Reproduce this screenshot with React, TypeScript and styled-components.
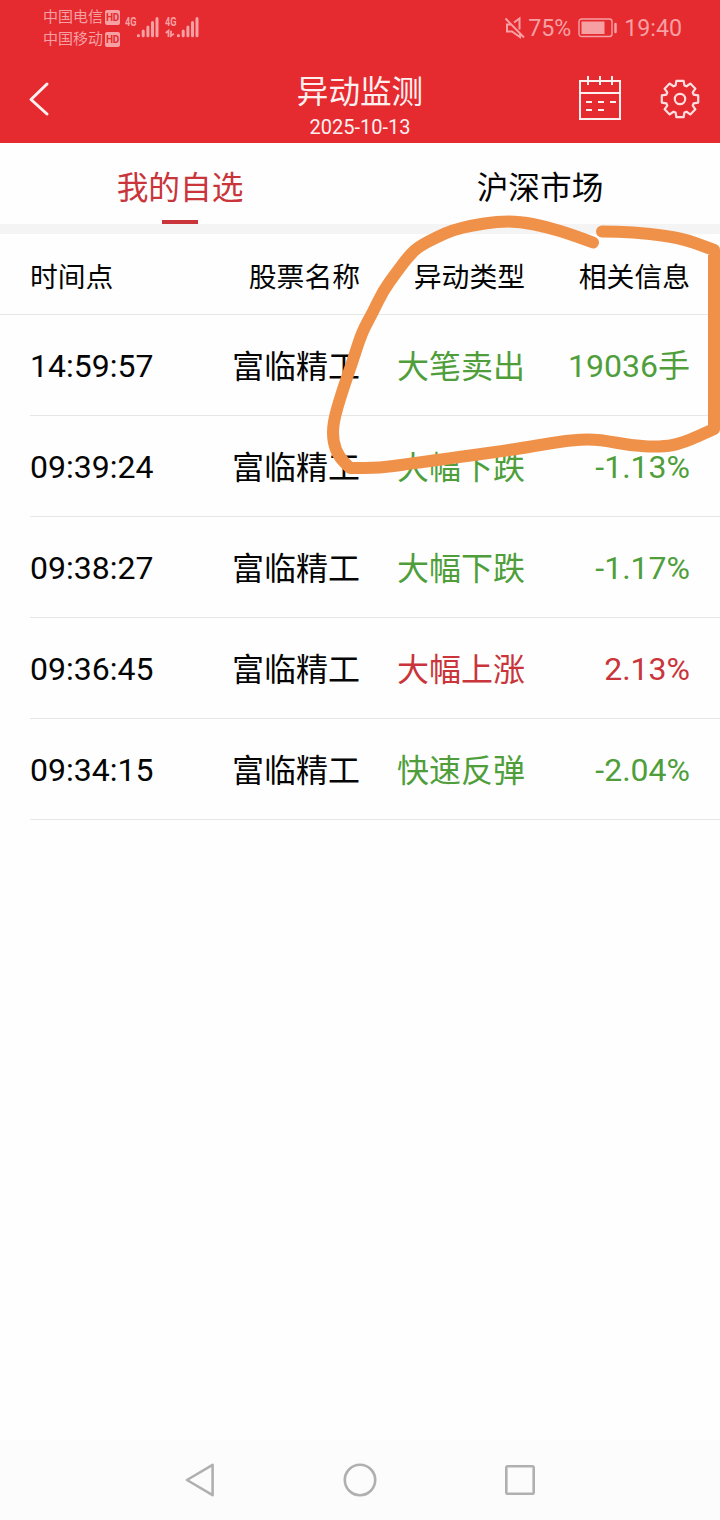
import React from "react";
import styled, { createGlobalStyle } from "styled-components";

const GlobalStyle = createGlobalStyle`
  * { box-sizing: border-box; }
  body { margin: 0; background: #fdfdfd; }
`;

const RED = "#e52a30";
const TINT = "#f6a0a3";
const UP = "#c9353a";
const DOWN = "#4f9e3b";

const Screen = styled.div`
  position: relative;
  display: flex;
  flex-direction: column;
  width: 720px;
  height: 1520px;
  overflow: hidden;
  background: #fdfefd;
  color: #050505;
  font-family: Roboto, "Noto Sans CJK SC", sans-serif;
`;

const StatusBar = styled.div`
  display: flex;
  justify-content: space-between;
  align-items: center;
  height: 56px;
  padding: 0 38px 0 43px;
  background: ${RED};
  color: ${TINT};
`;

const StatusGroup = styled.div`
  display: flex;
  align-items: center;
`;

const Carriers = styled.div`
  display: flex;
  flex-direction: column;
  margin-right: 5px;
`;

const Carrier = styled.div`
  display: flex;
  align-items: center;
  gap: 2px;
  height: 22px;
  font-size: 15px;
  line-height: 22px;
`;

const HdBadge = styled.span`
  width: 15px;
  height: 15px;
  border-radius: 2px;
  background: ${TINT};
  color: ${RED};
  font-size: 10px;
  font-weight: 700;
  line-height: 15.5px;
  text-align: center;
  letter-spacing: -0.3px;
`;

const StatusText = styled.span<{ $gap: number }>`
  margin-left: ${(p) => p.$gap}px;
  font-size: 23.2px;
  line-height: 56px;
`;

const BatteryIcon = styled.svg`
  margin-left: 7px;
`;

const NavBar = styled.header`
  display: grid;
  grid-template-columns: 160px 1fr 160px;
  height: 87px;
  background: ${RED};
  color: #fff0f0;
`;

const BackButton = styled.div`
  padding: 25px 0 0 26px;
`;

const Heading = styled.div`
  display: flex;
  flex-direction: column;
  align-items: center;
  padding-top: 17px;
`;

const Title = styled.h1`
  margin: 0;
  font-size: 31.6px;
  font-weight: 400;
  line-height: 40px;
`;

const DateText = styled.div`
  font-size: 20px;
  line-height: 28px;
`;

const Actions = styled.div`
  display: flex;
  gap: 34px;
  padding: 19px 0 0 17px;
`;

const Tabs = styled.nav`
  display: grid;
  grid-template-columns: 1fr 1fr;
  height: 91px;
  border-bottom: 10px solid #f4f4f4;
`;

const Tab = styled.div<{ $active?: boolean }>`
  display: flex;
  flex-direction: column;
  align-items: center;
  justify-content: space-between;
  padding-top: 22px;
  font-size: 31.7px;
  line-height: 48px;
  color: ${(p) => (p.$active ? UP : "#050505")};
`;

const TabLine = styled.span`
  width: 36px;
  height: 4px;
  background: ${UP};
`;

const Row = styled.div<{ $head?: boolean }>`
  display: grid;
  grid-template-columns: 150px 180px 165px 165px;
  align-items: center;
  height: ${(p) => (p.$head ? 81 : 101)}px;
  margin-left: ${(p) => (p.$head ? 0 : 30)}px;
  padding-top: ${(p) => (p.$head ? 7 : 2)}px;
  padding-left: ${(p) => (p.$head ? 30 : 0)}px;
  border-bottom: 1px solid #e6e8e8;
  font-size: ${(p) => (p.$head ? 27.8 : 32)}px;
  line-height: 48px;
`;

const Cell = styled.span<{ $color?: string; $left?: boolean; $lower?: boolean }>`
  padding-top: ${(p) => (p.$lower ? 2 : 0)}px;
  text-align: ${(p) => (p.$left ? "left" : "right")};
  color: ${(p) => p.$color ?? "inherit"};
  white-space: nowrap;
`;

const SystemNav = styled.footer`
  display: flex;
  justify-content: center;
  align-items: center;
  gap: 120px;
  height: 80px;
  margin-top: auto;
  background: #fcfcfc;
`;

const Annotation = styled.svg`
  position: absolute;
  top: 0;
  left: 0;
  pointer-events: none;
`;

const rows = [
  { time: "14:59:57", name: "富临精工", type: "大笔卖出", info: "19036手", color: DOWN },
  { time: "09:39:24", name: "富临精工", type: "大幅下跌", info: "-1.13%", color: DOWN },
  { time: "09:38:27", name: "富临精工", type: "大幅下跌", info: "-1.17%", color: DOWN },
  { time: "09:36:45", name: "富临精工", type: "大幅上涨", info: "2.13%", color: UP },
  { time: "09:34:15", name: "富临精工", type: "快速反弹", info: "-2.04%", color: DOWN },
];

// Outline of an eight-toothed gear centred on the origin.
const gearPoints = Array.from({ length: 8 }, (_, i) => {
  const a = (i * Math.PI) / 4;
  return [[-4.4, -13.6], [-3.6, -18.2], [3.6, -18.2], [4.4, -13.6]]
    .map(([x, y]) =>
      `${(x * Math.cos(a) - y * Math.sin(a)).toFixed(2)},${(x * Math.sin(a) + y * Math.cos(a)).toFixed(2)}`)
    .join(" ");
}).join(" ");

// Freehand marker stroke; a repeated point keeps its corner sharp.
const strokePoints = [
  [593, 242.5], [573, 235], [547, 227], [520, 221.5], [497, 221.5], [472, 225.5], [453, 230],
  [437, 237], [418, 247], [408, 257], [396, 273], [383, 291], [373, 312], [362, 332], [353, 360],
  [341, 395], [333, 423], [333, 442], [339, 457], [350, 468], [350, 468], [380, 468], [407, 464],
  [460, 457], [520, 448.5], [540, 445], [575, 439.5], [600, 439.5], [633, 446], [663, 447],
  [683, 443], [714, 429], [714, 429], [714, 250], [714, 250], [687, 240], [667, 236], [633, 232], [602, 231.5],
];
const strokePath =
  `M${strokePoints[0].join(" ")}` +
  strokePoints
    .slice(1, -1)
    .map(([x, y], i) => {
      const [nx, ny] = strokePoints[i + 2];
      return `Q${x} ${y} ${(x + nx) / 2} ${(y + ny) / 2}`;
    })
    .join("") +
  `L${strokePoints[strokePoints.length - 1].join(" ")}`;

const Signal = ({ data }: { data?: boolean }) => (
  <svg width="40" height="28" viewBox="0 0 40 28" fill={TINT}>
    <text x="0" y="12.3" fontSize="12" fontWeight="700" fontFamily="Roboto, sans-serif" textLength="11.5" lengthAdjust="spacingAndGlyphs">4G</text>
    <g stroke={TINT} strokeWidth="3" strokeLinecap="round">
      <path d="M13.4 21.400v.3M18.2 17v4.700M22.900 13v8.700M27.500 8.500v13.200M32 4.500v17.200" />
    </g>
    {data && <path d="M.8 19l2.700-2.300V23M6 16.800v5.200l3-2.400" fill="none" stroke={TINT} strokeWidth="1.8" />}
  </svg>
);

export default function App() {
  return (
    <Screen>
      <GlobalStyle />
      <StatusBar>
        <StatusGroup>
          <Carriers>
            <Carrier>中国电信<HdBadge>HD</HdBadge></Carrier>
            <Carrier>中国移动<HdBadge>HD</HdBadge></Carrier>
          </Carriers>
          <Signal />
          <Signal data />
        </StatusGroup>
        <StatusGroup>
          <svg width="22" height="24" viewBox="0 0 22 24" fill="none" stroke={TINT} strokeWidth="2">
            <path d="M1.500 2.500l18.500 19M7 8.500H3v7h5l8 5.500v-4M10 6.500l5.500-4v11" />
          </svg>
          <StatusText $gap={2}>75%</StatusText>
          <BatteryIcon width="40" height="20" viewBox="0 0 40 20" fill="none">
            <rect x="1" y="1" width="33" height="17.5" rx="2.5" stroke={TINT} strokeWidth="1.4" />
            <rect x="3.5" y="3.500" width="23" height="12.5" fill={TINT} />
            <path d="M37.500 6v8" stroke={TINT} strokeWidth="2.5" strokeLinecap="round" />
          </BatteryIcon>
          <StatusText $gap={6}>19:40</StatusText>
        </StatusGroup>
      </StatusBar>

      <NavBar>
        <BackButton>
          <svg width="26" height="36" viewBox="0 0 26 36" fill="none" stroke="#fff0f0" strokeWidth="3" strokeLinecap="round" strokeLinejoin="round">
            <path d="M21 3L5 18.5 21 33" />
          </svg>
        </BackButton>
        <Heading>
          <Title>异动监测</Title>
          <DateText>2025-10-13</DateText>
        </Heading>
        <Actions>
          <svg width="46" height="48" viewBox="0 0 46 48" fill="none" stroke="#fff0f0" strokeWidth="2">
            <path d="M3 6h40v38H3zM3 18h40M11 1v9M23 1v9M35 1v9M9 27h6M21 27h6M33 27h6M9 35h6M21 35h6" />
          </svg>
          <svg width="46" height="48" viewBox="-23 -24 46 48" fill="none" stroke="#ffdfe0" strokeWidth="2.2" strokeLinejoin="round">
            <polygon points={gearPoints} />
            <circle r="5.200" />
          </svg>
        </Actions>
      </NavBar>

      <Tabs>
        <Tab $active>我的自选<TabLine /></Tab>
        <Tab>沪深市场</Tab>
      </Tabs>

      <Row $head>
        <Cell $left>时间点</Cell>
        <Cell>股票名称</Cell>
        <Cell>异动类型</Cell>
        <Cell>相关信息</Cell>
      </Row>
      {rows.map((r) => (
        <Row key={r.time}>
          <Cell $left>{r.time}</Cell>
          <Cell $lower>{r.name}</Cell>
          <Cell $lower $color={r.color}>{r.type}</Cell>
          <Cell $color={r.color}>{r.info}</Cell>
        </Row>
      ))}

      <SystemNav>
        <svg width="40" height="40" viewBox="0 0 40 40" fill="none" stroke="#b0b0b0" strokeWidth="2.6" strokeLinejoin="round">
          <path d="M32.600 4.800v30.400L7 20z" />
        </svg>
        <svg width="40" height="40" viewBox="0 0 40 40" fill="none" stroke="#b0b0b0" strokeWidth="2.6">
          <circle cx="20" cy="20" r="15.2" />
        </svg>
        <svg width="40" height="40" viewBox="0 0 40 40" fill="none" stroke="#b0b0b0" strokeWidth="2.6">
          <rect x="6.3" y="6.3" width="27.4" height="27.4" rx="1.5" />
        </svg>
      </SystemNav>

      <Annotation width="720" height="520" viewBox="0 0 720 520" fill="none" stroke="#f0914a" strokeWidth="12" strokeLinecap="round" strokeLinejoin="round">
        <path d={strokePath} />
      </Annotation>
    </Screen>
  );
}
